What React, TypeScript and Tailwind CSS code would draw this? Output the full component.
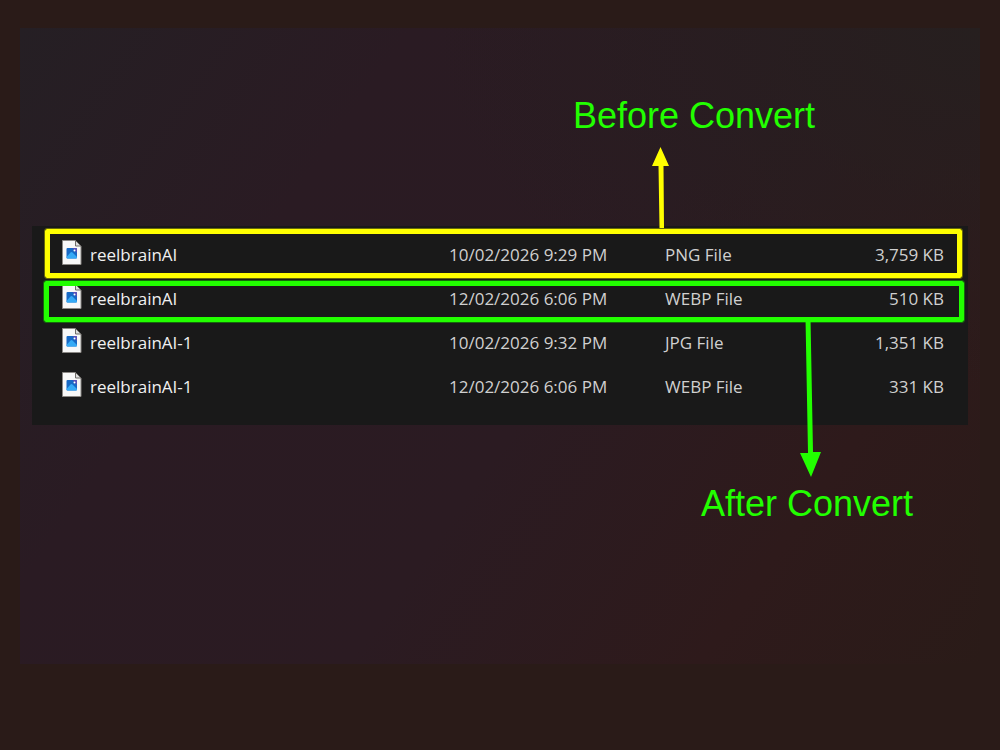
const FILES = [
  { name: 'reelbrainAI',   date: '10/02/2026 9:29 PM', type: 'PNG File',  size: '3,759 KB', mark: 'before' },
  { name: 'reelbrainAI',   date: '12/02/2026 6:06 PM', type: 'WEBP File', size: '510 KB',   mark: 'after' },
  { name: 'reelbrainAI-1', date: '10/02/2026 9:32 PM', type: 'JPG File',  size: '1,351 KB', mark: '' },
  { name: 'reelbrainAI-1', date: '12/02/2026 6:06 PM', type: 'WEBP File', size: '331 KB',   mark: '' },
]

function ImageFileIcon() {
  return (
    <svg width="20" height="30" viewBox="0 0 20 30" className="flex-shrink-0" aria-hidden="true">
      <path d="M.5 .5H13.5L19 6V24.5H.5Z" fill="#f8f8f8" stroke="#8b8885" />
      <path d="M13.5 .5V6H19Z" fill="#dedede" stroke="#6f6c69" />
      <rect x="4.5" y="8" width="10.5" height="10.5" rx="1" fill="#1769c5" />
      <path d="M10.5 8H14Q15 8 15 9V13Z" fill="#5a4fb7" />
      <path d="M4.5 17L8.5 12.5Q9.5 11.6 10.5 12.5L15 17V17.5Q15 18.5 14 18.5H5.5Q4.5 18.5 4.5 17.5Z" fill="#35aaf5" />
      <circle cx="12.5" cy="10.5" r="1" fill="#fff" />
    </svg>
  )
}

export default function App() {
  return (
    <main className="min-h-screen bg-[#2a1b18] px-5 pt-7 pb-[87px] font-['Open_Sans','Noto_Sans',sans-serif]">
      <section className="bg-[radial-gradient(ellipse_at_100%_0%,#261f1f_0%,#261f1f00_40%),linear-gradient(125deg,#251f24_0%,#2a1b23_28%,#2b1b22_55%,#2e1a1b_80%,#2a1b18_100%)] px-3 pt-[66px] pb-[138px]">
        {/* Before label */}
        <div className="flex justify-end pr-[153px]">
          <div>
            <h2 className="font-['Liberation_Sans',sans-serif] text-[36px] leading-[44px] text-[#22ff00]">Before Convert</h2>
            <svg width="20" height="82" viewBox="0 0 20 82" className="mt-2 ml-[78px]" aria-hidden="true">
              <path d="M9.5 1L18 20H12.5L13 82H8.5L7.5 20H1Z" fill="#ffff00" />
            </svg>
          </div>
        </div>

        {/* File list */}
        <div className="-mt-0.5 bg-[#191919] px-3 pt-[7px] pb-4">
          <table className="w-full table-fixed text-[17px] leading-6 text-[#d0d0d0]">
            <colgroup>
              <col />
              <col className="w-[216px]" />
              <col className="w-[180px]" />
              <col className="w-[111px]" />
            </colgroup>
            <tbody>
              {FILES.map(({ name, date, type, size, mark }) => (
                <tr key={name + type} className="relative h-11">
                  <td className="pl-[18px] text-[#f0f0f0]">
                    <div className="flex items-center gap-2">
                      <ImageFileIcon />
                      {name}
                    </div>
                    {mark === 'before' && (
                      <span className="absolute -top-1 -right-1.5 -bottom-px left-px rounded-xs border-5 border-[#ffff00] outline outline-[#66660c]" />
                    )}
                    {mark === 'after' && (
                      <span className="absolute top-1 -right-2 -bottom-px left-0 rounded-xs border-5 border-[#22ff00] outline outline-[#17660c]" />
                    )}
                  </td>
                  <td>{date}</td>
                  <td>{type}</td>
                  <td className="pr-3 text-right">{size}</td>
                </tr>
              ))}
            </tbody>
          </table>
        </div>

        {/* After label */}
        <div className="flex justify-end pt-[57px] pr-[55px]">
          <div className="relative">
            <svg width="22" height="160" viewBox="0 0 22 160" className="absolute bottom-full left-[99px] mb-1" aria-hidden="true">
              <path d="M5.5 0H10.5L13 134H21L11 159L0 135H8Z" fill="#22ff00" />
            </svg>
            <h2 className="font-['Liberation_Sans',sans-serif] text-[36px] leading-[44px] text-[#22ff00]">After Convert</h2>
          </div>
        </div>
      </section>
    </main>
  )
}
